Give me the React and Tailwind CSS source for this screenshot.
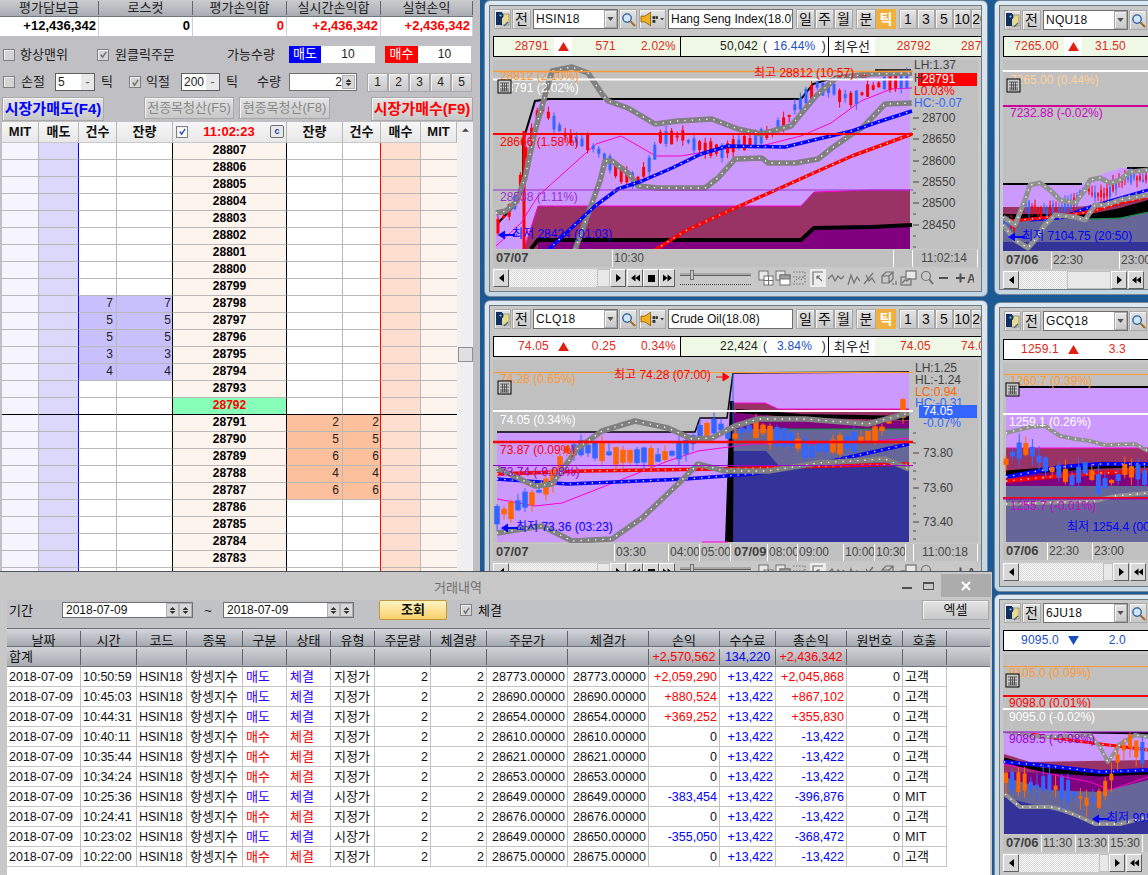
import React from "react";

const raised = "border border-t-white border-l-white border-r-[#808080] border-b-[#707070] bg-[#d6d6d6]";
const soft = "border border-[#a8a8a8] bg-gradient-to-b from-[#e4e4e4] to-[#c8c8c8] shadow-[inset_1px_1px_0_#f4f4f4]";

function interp(pts, x) {
  for (let i = 0; i < pts.length - 1; i++) {
    const a = pts[i], b = pts[i + 1];
    if (x >= a[0] && x <= b[0]) return a[1] + ((b[1] - a[1]) * (x - a[0])) / (b[0] - a[0] || 1);
  }
  return pts[pts.length - 1][1];
}
const str = (pts) => pts.map((p) => p.join(",")).join(" ");

function Candles({ pts, step = 5, w = 3, seed = 7, up = "#ff0000", down = "#3366ff", amp = 10, wick = 6 }) {
  let s = seed * 9301 + 49297;
  const r = () => { s = (s * 9301 + 49297) % 233280; return s / 233280; };
  const out = [];
  for (let x = pts[0][0]; x <= pts[pts.length - 1][0]; x += step) {
    const y = interp(pts, x);
    const h = 2 + r() * amp;
    const top = y - h / 2 + (r() - 0.5) * 4;
    const c = r() > 0.5 ? up : down;
    out.push(
      <g key={x}>
        <line x1={x} x2={x} y1={top - r() * wick} y2={top + h + r() * wick} stroke={c} strokeWidth="1" />
        <rect x={x - w / 2} y={top} width={w} height={h} fill={c} />
      </g>
    );
  }
  return <g>{out}</g>;
}
function Band({ pts, color = "#808080", w = 5.5, dot = "#ffffff" }) {
  return (
    <g fill="none">
      <polyline points={str(pts)} stroke={color} strokeWidth={w} strokeLinejoin="round" />
      <polyline points={str(pts)} stroke={dot} strokeWidth="1.3" strokeDasharray="1.3 6" />
    </g>
  );
}
function Thin({ pts, color = "#ff00cc", w = 1 }) {
  return <polyline points={str(pts)} fill="none" stroke={color} strokeWidth={w} />;
}
function Fill({ pts, color }) {
  return <polygon points={str(pts)} fill={color} />;
}
function L({ x, y, c = "#404040", children, b }) {
  return <text x={x} y={y} fill={c} fontSize="12" fontWeight={b ? "bold" : "normal"} dominantBaseline="middle">{children}</text>;
}
function HLine({ y, c, w = 1, x1 = 480, x2 = 912 }) {
  return <line x1={x1} x2={x2} y1={y} y2={y} stroke={c} strokeWidth={w} />;
}
function Cal({ x, y }) {
  return (
    <g>
      <rect x={x} y={y} width="13" height="13" fill="#c8c8c8" stroke="#000" />
      <path d={`M${x + 2} ${y + 3}h9M${x + 2} ${y + 6}h9M${x + 2} ${y + 9}h9M${x + 2} ${y + 11}h9M${x + 4.5} ${y + 3}v8M${x + 6.5} ${y + 3}v8M${x + 8.5} ${y + 3}v8`} stroke="#404040" strokeWidth="0.8" fill="none" />
    </g>
  );
}
function Arrow({ x, y, c = "#0000ff" }) {
  return <path d={`M${x} ${y}l7 -4.5v3.5h10v2h-10v3.5z`} fill={c} />;
}
function Ticks({ x = 912, major, minor }) {
  const out = [];
  for (const y of major) out.push(<line key={"m" + y} x1={x} x2={x + 6} y1={y} y2={y} stroke="#404040" />);
  for (const y of minor) out.push(<line key={"n" + y} x1={x} x2={x + 3} y1={y} y2={y} stroke="#505050" />);
  return <g>{out}</g>;
}

function HelpIcon() {
  return (
    <svg viewBox="0 0 15 16" className="w-[15px] h-[16px]">
      <rect x="6" y="3" width="8" height="11" fill="#e8d890" stroke="#808060" strokeWidth="0.7" />
      <rect x="1" y="1" width="6" height="13" fill="#103060" />
      <circle cx="5.5" cy="4.5" r="3" fill="#103060" />
      <circle cx="5.5" cy="4.5" r="1.1" fill="#80c0f0" />
      <path d="M9 15l4-4" stroke="#4060a0" strokeWidth="1.2" />
    </svg>
  );
}
function SearchIcon() {
  return (
    <svg viewBox="0 0 16 16" className="w-[15px] h-[15px]">
      <circle cx="6.5" cy="6.5" r="4.5" fill="#cfe6fa" stroke="#2a5a9a" strokeWidth="1.4" />
      <path d="M10 10l5 5" stroke="#a06820" strokeWidth="2.2" />
    </svg>
  );
}
function SpeakerIcon() {
  return (
    <svg viewBox="0 0 26 16" className="w-[26px] h-[16px]">
      <path d="M1 5h4l6-4v14l-6-4H1z" fill="#f0b020" stroke="#805000" strokeWidth="0.8" />
      <rect x="13" y="5" width="3" height="3" fill="#303030" />
      <rect x="13" y="9" width="3" height="3" fill="#303030" />
      <rect x="16.5" y="5" width="2" height="3" fill="#303030" />
      <path d="M21 7h4l-2 2.5z" fill="#404040" />
    </svg>
  );
}
const Drop = () => (
  <svg viewBox="0 0 8 5" className="w-[7px] h-[4px]"><path d="M0 0h8L4 5z" fill="#505050" /></svg>
);

function Toolbar({ code, name }) {
  const B = "flex items-center justify-center shrink-0 text-[14px] text-[#111] " + soft;
  return (
    <div className="flex h-[20px] shrink-0 items-stretch pl-[4px] overflow-hidden">
      <div className={"w-[17px] " + B}><HelpIcon /></div>
      <div className={"w-[19px] ml-[1px] " + B}>전</div>
      <div className="w-[85px] ml-[2px] shrink-0 flex border border-[#707070] bg-white">
        <span className="flex-1 pl-[2px] text-[12px] leading-[18px] tracking-[0.3px] text-[#111]">{code}</span>
        <span className={"w-[13px] " + B}><Drop /></span>
      </div>
      <div className={"w-[18px] ml-[1px] " + B}><SearchIcon /></div>
      <div className={"w-[27px] ml-[2px] " + B}><SpeakerIcon /></div>
      <div className="w-[125px] ml-[2px] shrink-0 border border-[#707070] bg-white overflow-hidden whitespace-nowrap pl-[2px] text-[12px] leading-[18px] text-[#111]">{name}</div>
      <div className="flex ml-[3px] shrink-0">
        {["일", "주", "월"].map((t) => <div key={t} className={"w-[19px] " + B}>{t}</div>)}
      </div>
      <div className="flex ml-[3px] shrink-0">
        <div className={"w-[20px] " + B}>분</div>
        <div className="w-[20px] shrink-0 flex items-center justify-center bg-[#f0b040] text-white text-[14px] font-bold">틱</div>
      </div>
      <div className="flex ml-[3px] shrink-0">
        {["1", "3", "5", "10", "20"].map((t) => <div key={t} className={"w-[18px] overflow-hidden text-[12px] " + B}>{t}</div>)}
      </div>
    </div>
  );
}

function InfoRow({ gap, i }) {
  const tint = i.tint ? "bg-[#eef8e4]" : "bg-white";
  const priceC = i.down ? "text-[#1a50c0]" : "text-[#e02820]";
  return (
    <div className={"flex h-[21px] shrink-0 ml-[3px] w-[489px] border border-black text-[12px] tracking-[0.2px] leading-[19px] whitespace-nowrap overflow-hidden " + gap}>
      <div className={"w-[60px] shrink-0 text-right pr-[5px] " + tint + " " + priceC}>{i.p}</div>
      <div className="w-[18px] shrink-0 bg-white flex items-center justify-center">
        <svg viewBox="0 0 12 10" className="w-[11px] h-[9px]">
          {i.down ? <path d="M0 0h12L6 10z" fill="#1a50c0" /> : <path d="M6 0l6 10H0z" fill="#e02010" />}
        </svg>
      </div>
      <div className={"w-[46px] shrink-0 text-right pr-[2px] " + tint + " " + priceC}>{i.d}</div>
      <div className={"w-[63px] shrink-0 text-right pr-[4px] border-r border-black " + tint + " " + priceC}>{i.pc}</div>
      <div className="w-[80px] shrink-0 text-right pr-[3px] bg-[#eef8e4] text-[#222]">{i.v}</div>
      <div className="w-[68px] shrink-0 bg-white flex justify-between pr-[2px] pl-[2px] border-r border-black text-[#222]">
        <span>(</span><span className="text-[#1a50c0]">{i.vp}</span><span>)</span>
      </div>
      <div className="w-[46px] shrink-0 bg-white text-center text-[#222] text-[13px]">최우선</div>
      <div className="w-[60px] shrink-0 bg-[#eef8e4] text-right pr-[4px] text-[#e02820]">{i.b}</div>
      <div className="flex-1 bg-[#eef8e4] pl-[26px] text-[#e02820]">{i.a}</div>
    </div>
  );
}

function Tools() {
  return (
    <svg viewBox="0 0 216 18" className="w-[216px] h-[18px] shrink-0">
      <g fill="none" stroke="#707070" strokeWidth="1">
        <rect x="1" y="2" width="9" height="9" fill="#e8e8e8" /><rect x="6" y="7" width="9" height="9" fill="#fff" /><path d="M6 11.5h9M10.5 7v9" />
        <rect x="18" y="2" width="9" height="9" fill="#e8e8e8" /><rect x="22" y="6" width="10" height="10" fill="#fff" /><rect x="22" y="6" width="10" height="4" fill="#a0a0a0" />
        <path strokeDasharray="1.5 1.5" d="M35 3h12M35 8h12M35 15h12M47 3v12M36 13l4-4 3 2 4-5" />
      </g>
      <rect x="52" y="0" width="16" height="18" fill="#ececec" />
      <g fill="none" stroke="#707070" strokeWidth="1.2">
        <path d="M55 16V3h10M59 7l5 5M59 7h3M59 7v3" />
        <path d="M70 10l4-4 3 6 3-5 3 3 3-3" />
        <path d="M90 16l3-10 3 8 3-6 3 4" />
        <path d="M106 15l9-11M108 6l3 6 3-3 3 5" />
        <path d="M124 14V7l4-4h7v7l-4 4zM124 7h7v7M131 7l4-4M138 16v-4M135 16v-2" />
        <rect x="143" y="8" width="10" height="8" /><rect x="148" y="2" width="10" height="8" fill="#e8e8e8" /><path d="M144 14l3-3 2 1 3-3" />
        <circle cx="168" cy="7" r="4.5" /><path d="M171 10l4 5" strokeWidth="2" />
      </g>
      <path d="M181 9h9M198 9h9" stroke="#505050" strokeWidth="2" /><path d="M202.5 4.5v9" stroke="#505050" strokeWidth="2" />
      <text x="209" y="14" fontSize="12" fontWeight="bold" fill="#505050">A</text>
    </svg>
  );
}

function ScrollRow({ track, thumb, gap, full }) {
  const Btn = ({ children, w }) => <div className={"shrink-0 flex items-center justify-center bg-[#d8d8d8] border border-t-white border-l-white border-r-[#606060] border-b-[#606060] text-[#111] " + w}>{children}</div>;
  return (
    <div className={"flex h-[18px] shrink-0 ml-[3px] overflow-hidden " + gap}>
      <Btn w="w-[16px]"><svg viewBox="0 0 5 8" className="w-[5px] h-[8px]"><path d="M5 0v8L0 4z" fill="#000" /></svg></Btn>
      <div className={"shrink-0 bg-[repeating-conic-gradient(#ffffff_0_25%,#d4d4d4_0_50%)] bg-[length:2px_2px] " + track} />
      <div className={"shrink-0 bg-[#e8e8e8] border border-[#c0c0c0] " + thumb} />
      <Btn w="w-[16px]"><svg viewBox="0 0 5 8" className="w-[5px] h-[8px]"><path d="M0 0v8l5-4z" fill="#000" /></svg></Btn>
      <Btn w="w-[16px] ml-[1px]"><svg viewBox="0 0 10 8" className="w-[9px] h-[8px]"><path d="M5 0v8L0 4zM10 0v8L5 4z" fill="#000" /></svg></Btn>
      {full && <Btn w="w-[16px]"><span className="block w-[7px] h-[7px] bg-black" /></Btn>}
      {full && <Btn w="w-[16px]"><svg viewBox="0 0 10 8" className="w-[9px] h-[8px]"><path d="M0 0v8l5-4zM5 0v8l5-4z" fill="#000" /></svg></Btn>}
      {full && (
        <div className="w-[71px] ml-[5px] shrink-0 relative">
          <div className="mt-[4px] h-[3px] bg-[#a8a8a8] border-b border-[#606060]" />
          <div className="absolute left-[10px] top-[1px] w-[4px] h-[10px] bg-[#c8c8c8] border border-[#707070]" />
          <div className="mt-[6px] h-[3px] border-b border-dotted border-[#404040]" />
        </div>
      )}
      {full && <div className="ml-[7px]"><Tools /></div>}
    </div>
  );
}

function DateStrip({ cells, gap }) {
  return (
    <div className={"flex h-[17px] shrink-0 ml-[3px] bg-[#c0c0c0] text-[12px] leading-[16px] text-[#484848] whitespace-nowrap overflow-hidden " + gap}>
      {cells.map((c, i) => (
        <div key={i} className={"shrink-0 overflow-hidden border-r border-white " + c[1] + (c[2] ? " font-bold pl-[3px] text-[#404040] text-[13px]" : " pl-[1px]")}>{c[0]}</div>
      ))}
    </div>
  );
}

function ChartWindow({ frame, gapTop, code, name, info, infoGap, svgClass, vb, stripGap, cells, scrollGap, track, thumb, full, children }) {
  return (
    <div className={"absolute rounded-[6px] bg-gradient-to-b from-[#dce8f2] to-[#c4d6e4] border border-[#788898] pl-[4px] pr-[5px] py-[4px] " + frame}>
      <div className={"h-full w-full border border-[#707880] bg-[#c8c8c8] overflow-hidden flex flex-col " + gapTop}>
        <Toolbar code={code} name={name} />
        <InfoRow gap={infoGap} i={info} />
        <svg viewBox={vb} className={"block shrink-0 ml-[3px] bg-[#c0c0c0] " + svgClass}>{children}</svg>
        <DateStrip cells={cells} gap={stripGap} />
        <ScrollRow track={track} thumb={thumb} gap={scrollGap} full={full} />
      </div>
    </div>
  );
}

function Chart1() {
  const lower = [[574, 249], [599, 180], [604, 160], [611, 160], [627, 172], [637, 185], [657, 187], [704, 187], [717, 177], [734, 158], [761, 157], [767, 162], [794, 162], [817, 158], [831, 147], [851, 133], [861, 127], [884, 103], [911, 102]];
  const upper = [[495, 212], [505, 210], [516, 200], [524, 177], [534, 130], [551, 70], [571, 66], [587, 72], [601, 93], [607, 100], [627, 107], [654, 123], [677, 120], [711, 118], [737, 128], [760, 133], [790, 125], [815, 95], [835, 77], [868, 73], [911, 72]];
  return (
    <>
      <Fill color="#cc99ff" pts={[[495, 248], [495, 210], [506, 207], [522, 190], [522, 140], [535, 99], [800, 98], [812, 83], [870, 70], [909, 69], [909, 248]]} />
      <Fill color="#993366" pts={[[523, 248], [537, 205], [800, 205], [813, 191], [870, 189], [909, 189], [909, 248]]} />
      <Fill color="#800080" pts={[[537, 248], [537, 239], [800, 239], [813, 226], [870, 224], [909, 224], [909, 248]]} />
      <Thin color="#ff00cc" pts={[[523, 248], [537, 205], [800, 205], [813, 191], [870, 189], [909, 189]]} />
      <Thin color="#000" w={2} pts={[[497, 222], [515, 203], [522, 188], [522, 140], [534, 100], [548, 98], [800, 98], [812, 83], [825, 79], [868, 75]]} />
      <Thin color="#000" w={1.5} pts={[[874, 69], [910, 69]]} />
      <Thin color="#000" w={4} pts={[[530, 248], [537, 239], [800, 239], [813, 227], [870, 226], [911, 224]]} />
      <line x1="523" x2="523" y1="130" y2="248" stroke="#ff0000" strokeWidth="3" />
      <Thin color="#ff00cc" pts={[[495, 245], [520, 222], [537, 195], [595, 143], [620, 135], [655, 155], [680, 155], [720, 148], [760, 145], [800, 135], [830, 122], [860, 100], [890, 88], [911, 87]]} />
      <Candles seed={5} step={5.6} amp={14} pts={[[497, 225], [515, 200], [525, 150], [540, 105], [560, 130], [575, 140], [590, 143], [605, 160], [620, 175], [637, 180], [650, 160], [660, 135], [680, 135], [700, 145], [720, 150], [740, 142], [760, 135], [780, 125], [800, 100], [815, 85], [830, 88], [850, 100], [870, 85], [890, 83], [910, 80]]} />
      <Band pts={lower} />
      <Band pts={upper} />
      <Band color="#0000ff" w={3.5} pts={[[547, 249], [594, 205], [617, 188], [641, 180], [671, 167], [700, 153], [727, 145], [784, 146], [817, 138], [851, 130], [880, 120], [911, 110]]} />
      <Band color="#ff0000" w={3.5} pts={[[654, 249], [684, 230], [734, 207], [777, 188], [817, 170], [851, 155], [911, 133]]} />
      <HLine y={70.5} c="#ff9933" w={1.5} />
      <HLine y={78.5} c="#ffffff" w={2} />
      <HLine y={133} c="#ff0000" w={2} />
      <HLine y={189} c="#9933cc" />
      <L x={499} y={76} c="#ff9933">28812 (2.10%)</L>
      <L x={753} y={73} c="#ff0000">최고 28812 (10:57) →</L>
      <L x={499} y={88} c="#ffffff">28791 (2.02%)</L>
      <Cal x={497} y={79} />
      <L x={499} y={142} c="#ff0000">28666 (1.58%)</L>
      <L x={499} y={197} c="#9933cc">28538 (1.11%)</L>
      <Arrow x={497} y={234} />
      <L x={511} y={234} c="#0000ff">최저 28424 (01:03)</L>
      <Ticks major={[117, 138, 160, 181, 202, 224]} minor={[128, 149, 170, 192, 213, 235, 246]} />
      <L x={913} y={65}>LH:1.37</L>
      <rect x="917" y="72" width="59" height="13" fill="#ff0000" />
      <L x={913} y={78}>H</L>
      <L x={921} y={79} c="#ffffff">28791</L>
      <L x={913} y={91} c="#ff0000">L0.03%</L>
      <L x={913} y={103} c="#3366ff">HC:-0.07</L>
      {[["28700", 117], ["28650", 138], ["28600", 160], ["28550", 181], ["28500", 202], ["28450", 224]].map((a) => <L key={a[0]} x={921} y={a[1] + 1}>{a[0]}</L>)}
    </>
  );
}

function Chart2() {
  return (
    <>
      <Fill color="#cc99ff" pts={[[496, 541], [496, 431], [694, 431], [699, 417], [726, 417], [732, 372], [908, 372], [908, 541]]} />
      <Fill color="#993366" pts={[[733, 402], [764, 402], [777, 408], [908, 408], [908, 428], [733, 428]]} />
      <Fill color="#800080" pts={[[733, 412], [760, 412], [775, 420], [908, 420], [908, 428], [770, 428], [733, 428]]} />
      <Fill color="#666699" pts={[[733, 428], [908, 428], [908, 470], [733, 470]]} />
      <Fill color="#333399" pts={[[731, 450], [765, 450], [778, 465], [908, 465], [908, 541], [731, 541]]} />
      <Thin color="#009933" pts={[[775, 428], [908, 428]]} />
      <Thin color="#000" w={1.5} pts={[[496, 431], [694, 431], [699, 417], [726, 417], [732, 372], [908, 371]]} />
      <Thin color="#ff00cc" w={1} pts={[[733, 402], [764, 402], [777, 408], [908, 408]]} />
      <Thin color="#000" w={4} pts={[[735, 410], [764, 412], [800, 415], [860, 416], [908, 417]]} />
      <polygon points="729,400 733,400 732,541 724,541" fill="#000" />
      <line x1="732" x2="732" y1="372" y2="445" stroke="#3366ff" />
      <line x1="701" x2="727" y1="541" y2="541" stroke="#ff00cc" />
      <Thin color="#ff00cc" pts={[[496, 498], [534, 505], [561, 502], [617, 480], [667, 460], [697, 450], [751, 443], [851, 442], [908, 437]]} />
      <Band color="#ff0000" w={3.5} pts={[[496, 473], [584, 470], [717, 468], [908, 463]]} />
      <Band color="#0000ff" w={3.5} pts={[[496, 478], [567, 483], [684, 478], [751, 473], [817, 463], [908, 443]]} />
      <Candles seed={11} step={7} w={5.5} amp={18} wick={8} up="#ff6600" down="#3366ff" pts={[[496, 515], [515, 505], [535, 495], [550, 480], [565, 450], [580, 445], [600, 450], [620, 455], [640, 455], [660, 455], [680, 450], [700, 430], [715, 425], [735, 435], [750, 425], [775, 435], [790, 440], [810, 450], [830, 445], [850, 440], [870, 435], [890, 420], [908, 403]]} />
      <Band pts={[[496, 467], [534, 485], [551, 483], [577, 447], [601, 430], [634, 420], [667, 427], [691, 438], [711, 437], [734, 425], [757, 418], [804, 418], [867, 423], [908, 412]]} />
      <Band pts={[[496, 532], [541, 525], [571, 540], [611, 538], [641, 517], [677, 483], [697, 463], [724, 470], [767, 470], [817, 462], [884, 458], [908, 468]]} />
      <HLine y={371.5} c="#ff9933" />
      <HLine y={410} c="#ffffff" w={2} />
      <HLine y={441} c="#ff0000" w={2.5} />
      <HLine y={464.5} c="#9900cc" />
      <L x={499} y={379} c="#ff9933">74.28 (0.65%)</L>
      <Cal x={497} y={380} />
      <L x={613} y={375} c="#ff0000">최고 74.28 (07:00)</L>
      <path d="M715 376h12M722 372l6 4-6 4z" stroke="#ff0000" fill="#ff0000" />
      <L x={499} y={420} c="#ffffff">74.05 (0.34%)</L>
      <L x={499} y={450} c="#ff0000">73.87 (0.09%)</L>
      <L x={499} y={472} c="#9900cc">73.74 (-0.08%)</L>
      <Arrow x={500} y={527} />
      <L x={515} y={527} c="#0000ff">최저 73.36 (03:23)</L>
      <Ticks major={[452, 487, 521]} minor={[432, 442, 462, 470, 478, 497, 505, 513, 530, 538]} />
      <L x={914} y={368}>LH:1.25</L>
      <L x={914} y={380}>HL:-1.24</L>
      <L x={914} y={392} c="#ff6600">LC:0.94</L>
      <L x={914} y={403} c="#3366ff">HC:-0.31</L>
      <rect x="918" y="404" width="58" height="13" fill="#3366ff" />
      <L x={922} y={411} c="#ffffff">74.05</L>
      <L x={922} y={423} c="#3366ff">-0.07%</L>
      <L x={922} y={453}>73.80</L>
      <L x={922} y={488}>73.60</L>
      <L x={922} y={522}>73.40</L>
    </>
  );
}

function Chart3() {
  return (
    <>
      <Fill color="#cc99ff" pts={[[1003, 184], [1082, 184], [1100, 175], [1120, 168], [1148, 168], [1148, 251], [1003, 251]]} />
      <Fill color="#993366" pts={[[1003, 207], [1075, 207], [1100, 205], [1148, 195], [1148, 251], [1003, 251]]} />
      <Fill color="#000000" pts={[[1003, 214], [1090, 214], [1120, 208], [1148, 200], [1148, 220], [1003, 222]]} />
      <Fill color="#666699" pts={[[1003, 220], [1120, 218], [1148, 212], [1148, 251], [1003, 251]]} />
      <Fill color="#333399" pts={[[1003, 242], [1148, 242], [1148, 251], [1003, 251]]} />
      <Thin color="#000" w={2} pts={[[1003, 184], [1082, 184]]} />
      <Thin color="#000" w={2} pts={[[1127, 168], [1148, 168]]} />
      <Thin color="#009933" pts={[[1090, 219], [1120, 218], [1148, 212]]} />
      <Candles seed={3} step={3} w={1.5} amp={9} wick={8} pts={[[1005, 225], [1015, 225], [1025, 205], [1035, 208], [1045, 212], [1060, 210], [1070, 205], [1085, 190], [1095, 195], [1105, 195], [1115, 185], [1125, 178], [1135, 178], [1148, 180]]} />
      <Band color="#0000ff" w={3} pts={[[1030, 220], [1060, 218], [1090, 207], [1120, 198], [1148, 190]]} />
      <Band color="#ff0000" w={3} pts={[[1010, 221], [1050, 217], [1090, 212], [1120, 203], [1148, 197]]} />
      <Band w={5} color="#909090" pts={[[1003, 217], [1015, 225], [1025, 200], [1030, 185], [1040, 183], [1050, 190], [1060, 200], [1075, 203], [1085, 190], [1090, 180], [1100, 178], [1110, 183], [1120, 180], [1130, 172], [1148, 170]]} />
      <Band w={5} color="#909090" pts={[[1003, 225], [1015, 240], [1028, 248], [1035, 240], [1045, 225], [1055, 215], [1075, 217], [1085, 220], [1095, 205], [1105, 205], [1120, 200], [1148, 195]]} />
      <HLine y={71} c="#ffffff" w={2} x1={1003} x2={1148} />
      <HLine y={106} c="#cc0099" w={2} x1={1003} x2={1148} />
      <L x={1010} y={81} c="#ffcf99">7265.00 (0.44%)</L>
      <Cal x={1007} y={79} />
      <L x={1010} y={114} c="#cc00cc">7232.88 (-0.02%)</L>
      <Arrow x={1008} y={237} />
      <L x={1022} y={237} c="#0000ff">최저 7104.75 (20:50)</L>
    </>
  );
}

function Chart4() {
  return (
    <>
      <Fill color="#cc99ff" pts={[[1006, 386], [1148, 386], [1148, 541], [1006, 541]]} />
      <Fill color="#993366" pts={[[1006, 447], [1148, 447], [1148, 541], [1006, 541]]} />
      <Fill color="#800080" pts={[[1006, 470], [1148, 470], [1148, 541], [1006, 541]]} />
      <Fill color="#666699" pts={[[1006, 485], [1148, 485], [1148, 541], [1006, 541]]} />
      <Thin color="#ff00cc" pts={[[1006, 447], [1148, 447]]} />
      <Thin color="#000" w={5} pts={[[1006, 472], [1060, 468], [1100, 465], [1148, 464]]} />
      <Band color="#0000ff" w={4} pts={[[1006, 476], [1060, 466], [1100, 463], [1148, 463]]} />
      <Band color="#ff0000" w={4} pts={[[1006, 480], [1060, 475], [1100, 472], [1148, 470]]} />
      <Band color="#909090" w={4} pts={[[1006, 432], [1030, 426], [1045, 425], [1060, 435], [1075, 438], [1090, 440], [1105, 444], [1135, 443], [1148, 450]]} />
      <Band color="#909090" w={4} pts={[[1006, 503], [1095, 500], [1115, 495], [1148, 492]]} />
      <Candles seed={9} step={6.6} w={5} amp={18} up="#ff6600" down="#3366ff" wick={10} pts={[[1006, 460], [1015, 450], [1030, 445], [1040, 460], [1055, 468], [1070, 480], [1085, 468], [1100, 485], [1110, 482], [1125, 470], [1140, 470], [1148, 478]]} />
      <HLine y={373.5} c="#ff9933" x1={1003} x2={1148} />
      <HLine y={386} c="#000" w={2} x1={1006} x2={1148} />
      <HLine y={413} c="#ffffff" w={2} x1={1003} x2={1148} />
      <HLine y={497} c="#ff0000" w={2} x1={1003} x2={1148} />
      <line x1="1003" x2="1148" y1="498" y2="498" stroke="#9900cc" />
      <L x={1010} y={381} c="#ff9933">1260.7 (0.39%)</L>
      <Cal x={1006} y={382} />
      <L x={1009} y={422} c="#ffffff">1259.1 (0.26%)</L>
      <L x={1010} y={506} c="#cc00cc">1255.7 (-0.01%)</L>
      <L x={1067} y={527} c="#0000ff">최저 1254.4 (00:00)</L>
    </>
  );
}

function Chart5() {
  return (
    <>
      <Fill color="#cc99ff" pts={[[1004, 730], [1148, 730], [1148, 832], [1004, 832]]} />
      <Fill color="#993366" pts={[[1004, 752], [1030, 760], [1148, 758], [1148, 832], [1004, 832]]} />
      <Fill color="#800080" pts={[[1004, 770], [1148, 772], [1148, 832], [1004, 832]]} />
      <Fill color="#666699" pts={[[1004, 775], [1050, 788], [1100, 790], [1148, 778], [1148, 832], [1004, 832]]} />
      <Fill color="#333399" pts={[[1004, 795], [1050, 807], [1100, 822], [1148, 818], [1148, 832], [1004, 832]]} />
      <Thin color="#000" w={5} pts={[[1004, 758], [1040, 768], [1100, 772], [1148, 770]]} />
      <Band color="#0000ff" w={4} pts={[[1004, 760], [1040, 763], [1100, 770], [1148, 768]]} />
      <Band color="#ff0000" w={3} pts={[[1030, 732], [1070, 738], [1100, 742], [1125, 745], [1148, 748]]} />
      <Thin color="#ff00cc" pts={[[1004, 762], [1040, 770], [1090, 780], [1110, 788], [1148, 775]]} />
      <Thin color="#000" w={3} pts={[[1004, 727], [1030, 727], [1090, 730], [1148, 731]]} />
      <Band color="#909090" w={4} pts={[[1004, 729], [1040, 735], [1090, 733], [1100, 745], [1108, 760], [1120, 742], [1135, 733], [1148, 735]]} />
      <Band color="#909090" w={4} pts={[[1005, 792], [1020, 805], [1050, 805], [1060, 807], [1080, 815], [1095, 822], [1120, 822], [1148, 815]]} />
      <Candles seed={14} step={6.2} w={4} amp={20} up="#ff6600" down="#3366ff" wick={12} pts={[[1006, 775], [1020, 780], [1035, 785], [1050, 780], [1065, 790], [1080, 795], [1090, 800], [1100, 795], [1110, 780], [1120, 750], [1130, 740], [1148, 758]]} />
      <HLine y={664.5} c="#ff9933" x1={1003} x2={1148} />
      <HLine y={694} c="#ff0000" w={2} x1={1003} x2={1148} />
      <L x={1009} y={702} c="#ff0000">9098.0 (0.01%)</L>
      <rect x="1003" y="707" width="145" height="23" fill="#c0c0c0" />
      <HLine y={707} c="#ffffff" w={2} x1={1003} x2={1148} />
      <HLine y={730} c="#9900cc" x1={1003} x2={1148} />
      <L x={1009} y={672} c="#ff9933">9105.0 (0.09%)</L>
      <Cal x={1006} y={672} />
      <L x={1009} y={716} c="#ffffff">9095.0 (-0.02%)</L>
      <L x={1009} y={738} c="#9900cc">9089.5 (-0.08%)</L>
      <Arrow x={1092} y={817} />
      <L x={1107} y={817} c="#0000ff">최저 9090.0</L>
    </>
  );
}

const colW = "grid grid-cols-[37px_40px_38px_56px_114px_56px_38px_40px_36px]";
function OrderRow({ price, sell, buy, last, cur }) {
  const line = "border-b " + (last ? "border-b-black" : "border-b-[#b8b8b8]");
  const cell = "border-r border-r-[#b8b8b8] " + line;
  return (
    <div className={colW + " h-[17px] text-[12px] leading-[15px]"}>
      <div className={"bg-[#f5f4ff] " + cell} />
      <div className={"bg-[#dcd8fc] border-r border-r-[#0000ff] " + line} />
      <div className={"text-right pr-[3px] text-[#222] " + (sell ? "bg-[#c8c0fc] " : "bg-white ") + cell}>{sell}</div>
      <div className={"text-right pr-[1px] text-[#222] border-r border-r-black " + (sell ? "bg-[#c8c0fc] " : "bg-white ") + line}>{sell}</div>
      <div className={"text-center font-bold border-r border-r-black " + (cur ? "bg-[#88ffb8] text-[#ff0000] " : "bg-[#fef4ee] text-black ") + line}>{price}</div>
      <div className={"text-right pr-[3px] text-[#222] " + (buy ? "bg-[#fcc09c] " : "bg-white ") + cell}>{buy}</div>
      <div className={"text-right pr-[1px] text-[#222] border-r border-r-[#ff0000] " + (buy ? "bg-[#fcc09c] " : "bg-white ") + line}>{buy}</div>
      <div className={"bg-[#fedfcf] " + cell} />
      <div className={"bg-[#fef4ee] " + line} />
    </div>
  );
}

function Check({ on, blue, className = "" }) {
  return (
    <span className={"inline-flex items-center justify-center w-[12px] h-[12px] border border-[#808080] bg-[#d4d4d4] shadow-[inset_1px_1px_0_#f0f0f0] " + className}>
      {on && <svg viewBox="0 0 10 10" className="w-[9px] h-[9px]"><path d="M2 5l2 3 4-6" fill="none" stroke={blue ? "#3050b0" : "#707070"} strokeWidth="1.6" /></svg>}
    </span>
  );
}
function Spin() {
  return (
    <span className="w-[13px] h-[14px] shrink-0 flex flex-col items-center justify-center gap-[1px] bg-[#d8d8d8] border border-[#b0b0b0]">
      <svg viewBox="0 0 8 4" className="w-[7px] h-[3px]"><path d="M4 0l4 4H0z" fill="#333" /></svg>
      <svg viewBox="0 0 8 4" className="w-[7px] h-[3px]"><path d="M0 0h8L4 4z" fill="#333" /></svg>
    </span>
  );
}

function LeftPanel() {
  const heads = [["평가담보금", "w-[99px]"], ["로스컷", "w-[94px]"], ["평가손익합", "w-[94px]"], ["실시간손익합", "w-[94px]"], ["실현손익", "w-[92px]"]];
  const vals = [["+12,436,342", "text-black", "w-[99px]"], ["0", "text-black", "w-[94px]"], ["0", "text-[#ff0000]", "w-[94px]"], ["+2,436,342", "text-[#ff0000]", "w-[94px]"], ["+2,436,342", "text-[#ff0000]", "w-[92px]"]];
  const sells = { 28798: 7, 28797: 5, 28796: 5, 28795: 3, 28794: 4 };
  const buys = { 28791: 2, 28790: 5, 28789: 6, 28788: 4, 28787: 6 };
  const prices = [];
  for (let p = 28807; p >= 28783; p--) prices.push(p);
  const hc = "flex items-center justify-center bg-gradient-to-b from-[#f6f6f6] to-[#e8e8e8] border-r border-[#b8b8b8] border-b-2 border-b-[#c8c8c8] font-bold text-[13px] text-[#111]";
  return (
    <div className="w-[480px] h-[575px] bg-[#c0c0c4] overflow-hidden shrink-0 text-[13px] text-[#222]">
      <div className="flex h-[17px] w-[473px] bg-gradient-to-b from-[#cccccf] to-[#a8acb2] border-b border-[#707880]">
        {heads.map((h) => (
          <div key={h[0]} className={"flex items-center justify-center shrink-0 border-r border-[#606870] my-[1px] text-[#222] " + h[1]}>{h[0]}</div>
        ))}
      </div>
      <div className="flex h-[19px] w-[473px] bg-white font-bold text-[13px] leading-[18px]">
        {vals.map((v, i) => (
          <div key={i} className={"text-right pr-[2px] shrink-0 border-r border-[#d0d0d0] " + v[1] + " " + v[2]}>{v[0]}</div>
        ))}
      </div>
      <div className="flex items-center h-[19px] mt-[9px] pl-[3px]">
        <Check />
        <span className="ml-[5px] w-[77px]">항상맨위</span>
        <Check on />
        <span className="ml-[6px] w-[104px]">원클릭주문</span>
        <span className="w-[62px] ml-[8px]">가능수량</span>
        <span className="w-[32px] h-[17px] bg-[#0000ff] text-white text-center leading-[16px]">매도</span>
        <span className="w-[54px] h-[17px] bg-white text-center leading-[16px] text-[12px]">10</span>
        <span className="w-[33px] h-[17px] ml-[10px] bg-[#ff0000] text-white text-center leading-[16px]">매수</span>
        <span className="w-[53px] h-[17px] bg-white text-center leading-[16px] text-[12px]">10</span>
      </div>
      <div className="flex items-center h-[20px] mt-[8px] pl-[3px]">
        <Check />
        <span className="ml-[6px] w-[34px]">손절</span>
        <span className="w-[40px] h-[18px] flex bg-white border border-[#606060] text-[12px] leading-[16px] pl-[2px]"><span className="flex-1">5</span><span className="w-[13px] flex items-center justify-center bg-[#e8e8e8] text-[#555]">-</span></span>
        <span className="ml-[6px] w-[28px]">틱</span>
        <Check on />
        <span className="ml-[5px] w-[35px]">익절</span>
        <span className="w-[39px] h-[18px] flex bg-white border border-[#606060] text-[12px] leading-[16px] pl-[2px]"><span className="flex-1">200</span><span className="w-[13px] flex items-center justify-center bg-[#e8e8e8] text-[#555]">-</span></span>
        <span className="ml-[6px] w-[31px]">틱</span>
        <span className="w-[32px]">수량</span>
        <span className="w-[68px] h-[18px] flex items-center justify-end bg-white border border-[#707070] text-[12px] pr-[1px]">2<Spin /></span>
        <div className="flex ml-[10px]">
          {["1", "2", "3", "4", "5"].map((n) => <span key={n} className={"w-[21px] h-[19px] flex items-center justify-center text-[12px] " + soft}>{n}</span>)}
        </div>
      </div>
      <div className="flex h-[24px] mt-[5px] pl-[2px] text-[15px] font-bold">
        <span className={"w-[102px] flex items-center justify-center text-[#0000ff] whitespace-nowrap " + soft}>시장가매도(F4)</span>
        <span className={"w-[90px] ml-[40px] h-[22px] flex items-center justify-center font-normal text-[13px] text-[#888] whitespace-nowrap " + soft}>전종목청산(F5)</span>
        <span className={"w-[91px] ml-[5px] h-[22px] flex items-center justify-center font-normal text-[13px] text-[#888] whitespace-nowrap " + soft}>현종목청산(F8)</span>
        <span className={"w-[102px] ml-[41px] flex items-center justify-center text-[#ff0000] whitespace-nowrap " + soft}>시장가매수(F9)</span>
      </div>
      <div className="flex ml-[2px] w-[471px] mt-[1px]">
        <div className="w-[455px] shrink-0">
          <div className={colW + " h-[21px]"}>
            <div className={hc}>MIT</div>
            <div className={hc}>매도</div>
            <div className={hc}>건수</div>
            <div className={hc}>잔량</div>
            <div className={"justify-between! px-[2px] " + hc}>
              <Check on blue className="ml-[1px] bg-white!" />
              <span className="text-[#ff0000] text-[13px]">11:02:23</span>
              <span className="w-[14px] h-[13px] border border-[#707070] rounded-[2px] text-[9px] leading-[11px] text-center text-[#2040a0] bg-[#e8e8e8]">c</span>
            </div>
            <div className={hc}>잔량</div>
            <div className={hc}>건수</div>
            <div className={hc}>매수</div>
            <div className={hc}>MIT</div>
          </div>
          {prices.map((p) => <OrderRow key={p} price={p} sell={sells[p]} buy={buys[p]} cur={p === 28792} last={p === 28792} />)}
          <OrderRow />
        </div>
        <div className="w-[16px] bg-[#f0f0f0] flex flex-col items-center pt-[6px]">
          <svg viewBox="0 0 8 4" className="w-[7px] h-[4px]"><path d="M4 0l4 4H0z" fill="#444" /></svg>
          <div className="mt-[215px] w-[15px] h-[15px] bg-[#e0e0e0] border border-[#909090]" />
        </div>
      </div>
    </div>
  );
}

const tradeCols = "grid grid-cols-[74px_56px_50px_56px_44px_44px_44px_56px_56px_81px_81px_71px_56px_71px_56px_44px_1fr]";
const headers = ["날짜", "시간", "코드", "종목", "구분", "상태", "유형", "주문량", "체결량", "주문가", "체결가", "손익", "수수료", "총손익", "원번호", "호출", ""];
const trades = [
  ["10:50:59", "매도", "지정가", "28773", "28773", "+2,059,290", "+2,045,868", "고객"],
  ["10:45:03", "매도", "지정가", "28690", "28690", "+880,524", "+867,102", "고객"],
  ["10:44:31", "매도", "지정가", "28654", "28654", "+369,252", "+355,830", "고객"],
  ["10:40:11", "매수", "지정가", "28610", "28610", "0", "-13,422", "고객"],
  ["10:35:44", "매수", "지정가", "28621", "28621", "0", "-13,422", "고객"],
  ["10:34:24", "매수", "지정가", "28653", "28653", "0", "-13,422", "고객"],
  ["10:25:36", "매도", "시장가", "28649", "28649", "-383,454", "-396,876", "MIT"],
  ["10:24:41", "매수", "지정가", "28676", "28676", "0", "-13,422", "고객"],
  ["10:23:02", "매도", "시장가", "28649", "28650", "-355,050", "-368,472", "MIT"],
  ["10:22:00", "매수", "지정가", "28675", "28675", "0", "-13,422", "고객"],
];
function pnlColor(v) {
  if (v.startsWith("+")) return "text-[#ff0000]";
  if (v.startsWith("-")) return "text-[#0000ff]";
  return "text-[#111]";
}

function TradeWindow() {
  const g = "border-r border-b border-[#c4c4c4] whitespace-nowrap overflow-hidden leading-[20px] ";
  return (
    <div className="absolute left-0 top-[571px] w-[992px] h-[304px] bg-[#c8c8c8] border-t border-[#50565e] flex flex-col text-[12.5px] text-[#111]">
      <div className="flex h-[28px] shrink-0 relative">
        <span className="flex-1 text-center pl-[14px] text-[13px] leading-[31px] text-[#707070]">거래내역</span>
        <div className="flex items-start">
          <div className="mt-[15px] w-[10px] h-[2px] bg-[#505050] mr-[11px]" />
          <div className="mt-[10px] w-[11px] h-[8px] border border-[#505050] border-t-2 mr-[7px]" />
          <div className="mt-[2px] mr-[1px] w-[50px] h-[23px] bg-[#acacac] flex items-center justify-center text-white">
            <svg viewBox="0 0 10 10" className="w-[10px] h-[10px]"><path d="M1 1l8 8M9 1l-8 8" stroke="#fff" strokeWidth="2" /></svg>
          </div>
        </div>
      </div>
      <div className="ml-[7px] mr-[2px] flex-1 bg-[#c0c2c6] flex flex-col min-h-0">
        <div className="flex items-start h-[28px] shrink-0 text-[13px]">
          <span className="ml-[2px] w-[53px] leading-[22px]">기간</span>
          <span className="w-[131px] h-[16px] mt-[2px] flex items-center bg-white border border-[#707070] text-[12px] pl-[3px]"><span className="flex-1">2018-07-09</span><Spin /><Spin /></span>
          <span className="w-[30px] text-center leading-[22px]">~</span>
          <span className="w-[131px] h-[16px] mt-[2px] flex items-center bg-white border border-[#707070] text-[12px] pl-[3px]"><span className="flex-1">2018-07-09</span><Spin /><Spin /></span>
          <span className="w-[68px] h-[20px] ml-[25px] rounded-[2px] flex items-center justify-center font-bold bg-gradient-to-b from-[#fff4c0] to-[#f8d068] border border-[#c09840]">조회</span>
          <Check on className="ml-[13px] mt-[4px]" />
          <span className="ml-[6px] leading-[21px]">체결</span>
          <span className={"w-[67px] h-[20px] ml-auto mr-[1px] flex items-center justify-center " + soft}>엑셀</span>
        </div>
        <div className={tradeCols + " h-[19px] shrink-0 bg-gradient-to-b from-[#d4d6da] to-[#a4a8b0] border-t border-b border-[#6c7078] text-[13px]"}>
          {headers.map((h, i) => (
            <div key={i} className={"flex items-center justify-center my-[2px] " + (i < 16 ? "border-r border-[#606468]" : "")}>{h}</div>
          ))}
        </div>
        <div className={tradeCols + " h-[20px] shrink-0 bg-gradient-to-b from-[#d0d2d6] to-[#a8acb2] border-b border-[#6c7078]"}>
          {headers.map((h, i) => {
            const t = { 0: ["합계", "pl-[2px] text-[13px]"], 11: ["+2,570,562", "text-[#ff0000] text-center"], 12: ["134,220", "text-[#0000ff] text-center"], 13: ["+2,436,342", "text-[#ff0000] text-center"] }[i] || ["", ""];
            return <div key={i} className={"my-[2px] leading-[16px] whitespace-nowrap " + (i < 16 ? "border-r border-[#606468] " : "") + t[1]}>{t[0]}</div>;
          })}
        </div>
        <div className="flex-1 bg-white min-h-0 overflow-hidden">
          {trades.map((r) => (
            <div key={r[0]} className={tradeCols + " h-[20px]"}>
              <div className={g + "pl-[2px]"}>2018-07-09</div>
              <div className={g + "pl-[2px]"}>{r[0]}</div>
              <div className={g + "pl-[2px]"}>HSIN18</div>
              <div className={g + "pl-[3px] text-[13px]"}>항셍지수</div>
              <div className={g + "pl-[3px] text-[13px] " + (r[1] === "매도" ? "text-[#3300ff]" : "text-[#ff0000]")}>{r[1]}</div>
              <div className={g + "pl-[3px] text-[13px] " + (r[1] === "매도" ? "text-[#3300ff]" : "text-[#ff0000]")}>체결</div>
              <div className={g + "pl-[3px] text-[13px]"}>{r[2]}</div>
              <div className={g + "text-right pr-[2px]"}>2</div>
              <div className={g + "text-right pr-[2px]"}>2</div>
              <div className={g + "text-right pr-[2px]"}>{r[3]}.00000</div>
              <div className={g + "text-right pr-[2px]"}>{r[4]}.00000</div>
              <div className={g + "text-right pr-[2px] " + pnlColor(r[5])}>{r[5]}</div>
              <div className={g + "text-right pr-[2px] text-[#0000ff]"}>+13,422</div>
              <div className={g + "text-right pr-[2px] " + pnlColor(r[6])}>{r[6]}</div>
              <div className={g + "text-right pr-[2px]"}>0</div>
              <div className={g + "pl-[2px] " + (r[7] === "MIT" ? "" : "text-[13px]")}>{r[7]}</div>
              <div />
            </div>
          ))}
        </div>
      </div>
    </div>
  );
}

export default function App() {
  const cells1 = [["07/07", "w-[120px]", true], ["10:30", "w-[281px]"], ["", "w-[19px]"], ["11:02:14", "w-[65px] pl-[8px]!"]];
  const cells2 = [["07/07", "w-[122px]", true], ["03:30", "w-[54px]"], ["04:00", "w-[31px]"], ["05:00", "w-[31px]"], ["07/09", "w-[37px]", true], ["08:00", "w-[30px]"], ["09:00", "w-[46px]"], ["10:00", "w-[31px]"], ["10:30", "w-[31px]"], ["", "w-[8px]"], ["11:00:18", "w-[64px] pl-[8px]!"]];
  const cells3 = [["07/06", "w-[49px]", true], ["22:30", "w-[68px]"], ["23:00", "w-[60px]"]];
  const cells4 = [["07/06", "w-[45px]", true], ["22:30", "w-[45px]"], ["23:00", "w-[80px]"]];
  const cells5 = [["07/06", "w-[39px]", true], ["11:30", "w-[34px]"], ["13:30", "w-[33px]"], ["15:30", "w-[34px]"], ["", "w-[20px]"]];
  return (
    <div className="relative w-[1148px] h-[875px] overflow-hidden bg-[#1c5a96] text-[#222] [font-family:'Liberation_Sans','Noto_Sans_CJK_KR',sans-serif]">
      <LeftPanel />
      <ChartWindow frame="left-[484px] top-0 w-[504px] h-[297px]" gapTop="pt-[3px]" code="HSIN18" name="Hang Seng Index(18.0'"
        infoGap="mt-[7px]" svgClass="mt-[3px] w-[485px] h-[189px]" vb="492 59 485 189" stripGap="mt-[1px]" cells={cells1} scrollGap="mt-[2px]"
        track="w-[88px]" thumb="w-[13px]" full
        info={{ tint: true, p: "28791", d: "571", pc: "2.02%", v: "50,042", vp: "16.44%", b: "28792", a: "28792" }}>
        <Chart1 />
      </ChartWindow>
      <ChartWindow frame="left-[484px] top-[300px] w-[504px] h-[297px]" gapTop="pt-[3px]" code="CLQ18" name="Crude Oil(18.08)"
        infoGap="mt-[7px]" svgClass="mt-[3px] w-[485px] h-[183px]" vb="492 359 485 183" stripGap="mt-[1px]" cells={cells2} scrollGap="mt-[2px]"
        track="w-[88px]" thumb="w-[13px]" full
        info={{ p: "74.05", d: "0.25", pc: "0.34%", v: "22,424", vp: "3.84%", b: "74.05", a: "74.05" }}>
        <Chart2 />
      </ChartWindow>
      <ChartWindow frame="left-[994px] top-0 w-[500px] h-[295px]" gapTop="pt-[4px]" code="NQU18" name=""
        infoGap="mt-[6px]" svgClass="mt-[3px] w-[485px] h-[191px]" vb="1003 60 485 191" stripGap="mt-[1px]" cells={cells3} scrollGap="mt-[2px]"
        track="w-[48px]" thumb="w-[44px]"
        info={{ tint: true, p: "7265.00", d: "31.50", pc: "0.44%", v: "", vp: "", b: "", a: "" }}>
        <Chart3 />
      </ChartWindow>
      <ChartWindow frame="left-[994px] top-[302px] w-[500px] h-[290px]" gapTop="pt-[3px]" code="GCQ18" name=""
        infoGap="mt-[8px]" svgClass="mt-[3px] w-[485px] h-[179px]" vb="1003 362 485 179" stripGap="mt-[1px]" cells={cells4} scrollGap="mt-[3px]"
        track="w-[84px]" thumb="w-[10px]"
        info={{ p: "1259.1", d: "3.3", pc: "0.26%", v: "", vp: "", b: "", a: "" }}>
        <Chart4 />
      </ChartWindow>
      <ChartWindow frame="left-[994px] top-[594px] w-[500px] h-[290px]" gapTop="pt-[3px]" code="6JU18" name=""
        infoGap="mt-[7px]" svgClass="mt-[3px] w-[485px] h-[180px]" vb="1003 652 485 180" stripGap="mt-[1px]" cells={cells5} scrollGap="mt-[2px]"
        track="w-[80px]" thumb="w-[10px]"
        info={{ down: true, p: "9095.0", d: "2.0", pc: "0.02%", v: "", vp: "", b: "", a: "" }}>
        <Chart5 />
      </ChartWindow>
      <TradeWindow />
    </div>
  );
}
